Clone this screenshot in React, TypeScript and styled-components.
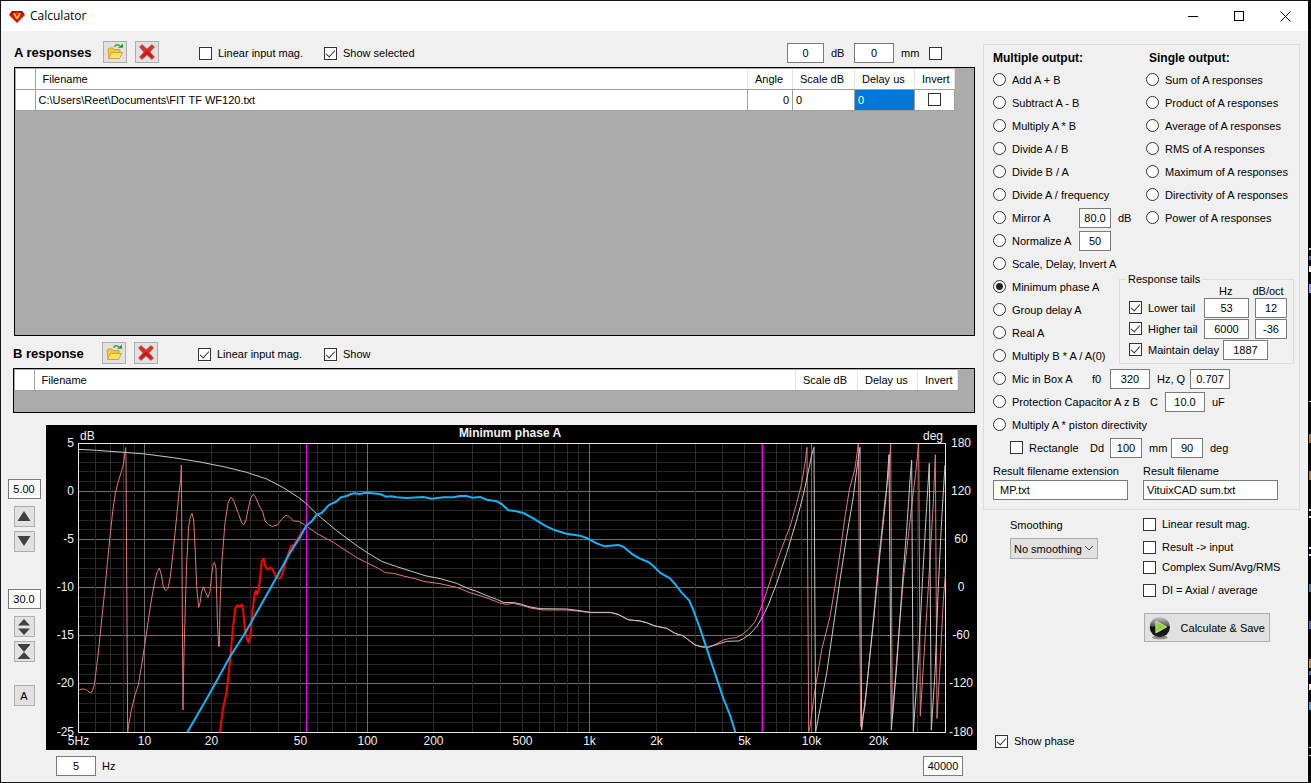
import React from "react";
import styled, { createGlobalStyle, css } from "styled-components";

const GlobalStyle = createGlobalStyle`
  * { box-sizing: border-box; }
  body { margin: 0; background: #000; }
  body, input, button, select {
    font-family: "Liberation Sans", Arial, sans-serif;
    font-size: 11px;
    line-height: 14px;
    color: #000;
  }
`;

const Frame = styled.div`
  position: relative;
  display: flex;
  flex-direction: column;
  min-height: 100vh;
  background: #f0f0f0;
  border: 1px solid #14141a;
  border-right: 3px solid #05050a;
`;

const EdgeMark = styled.i<{ $y: number; $h: number; $c: string }>`
  position: absolute;
  top: ${(p) => p.$y}px;
  right: -3px;
  width: 2px;
  height: ${(p) => p.$h}px;
  background: ${(p) => p.$c};
`;

const TitleBar = styled.header`
  display: flex;
  align-items: center;
  height: 30px;
  padding-left: 8px;
  background: #fff;
`;

const Title = styled.h1`
  flex: 1;
  margin: 0 0 0 5px;
  font-family: "Open Sans", "Noto Sans", sans-serif;
  font-size: 12px;
  font-weight: 400;
`;

const CaptionButton = styled.button`
  display: grid;
  place-items: center;
  width: 46px;
  height: 30px;
  padding: 0;
  border: 0;
  background: transparent;
`;

const Body = styled.main`
  flex: 1;
  display: grid;
  grid-template-columns: minmax(0, 1fr) 325px;
`;

const Left = styled.div`
  display: flex;
  flex-direction: column;
  padding: 10px 8px 0 12px;
`;

const ResponseSet = styled.section<{ $inset?: boolean }>`
  margin-bottom: 6px;
  padding-left: ${(p) => (p.$inset ? 1 : 0)}px;
`;

const Toolbar = styled.div`
  display: flex;
  align-items: center;
  height: 24px;
  margin-bottom: 2px;
`;

const Heading = styled.h2`
  width: 89px;
  margin: 0;
  font-size: 13px;
  font-weight: 700;
  white-space: nowrap;
`;

const IconButton = styled.button`
  display: grid;
  place-items: center;
  align-self: flex-start;
  width: 24px;
  height: 22px;
  margin-right: 8px;
  padding: 0;
  border: 1px solid #adadad;
  background: #e1e1e1;
`;

const Gap = styled.span<{ $w?: number }>`
  ${(p) => (p.$w ? css`flex: none; width: ${p.$w}px;` : css`flex: 1;`)}
`;

const Choice = styled.label<{ $w?: number }>`
  flex: none;
  display: flex;
  align-items: center;
  gap: 6px;
  white-space: nowrap;
  ${(p) => p.$w && css`width: ${p.$w}px;`}
`;

const Check = styled.input.attrs({ type: "checkbox" })`
  appearance: none;
  position: relative;
  flex: none;
  width: 13px;
  height: 13px;
  margin: 0;
  border: 1px solid #333;
  background: #fff;
  &:checked::after {
    content: "";
    position: absolute;
    left: 3px;
    top: 0;
    width: 4px;
    height: 8px;
    border: solid #333;
    border-width: 0 1px 1px 0;
    transform: rotate(42deg);
  }
`;

const Radio = styled.input.attrs({ type: "radio" })`
  appearance: none;
  flex: none;
  width: 13px;
  height: 13px;
  margin: 0;
  border: 1px solid #333;
  border-radius: 50%;
  background: #fff;
  &:checked {
    background: radial-gradient(circle, #222 0 3px, #fff 4px);
  }
`;

const Field = styled.input<{ $w: number; $left?: boolean; $top?: number }>`
  flex: none;
  width: ${(p) => p.$w}px;
  height: 20px;
  margin: ${(p) => p.$top ?? 0}px 0 0;
  padding: 0 3px;
  border: 1px solid #7a7a7a;
  border-radius: 0;
  background: #fff;
  text-align: ${(p) => (p.$left ? "left" : "center")};
`;

const Grid = styled.div<{ $h: number }>`
  height: ${(p) => p.$h}px;
  padding: 1px 0 0 1px;
  border: 1px solid #000;
  background: #ababab;
`;

const Table = styled.table<{ $rest: number }>`
  width: calc(100% - ${(p) => p.$rest}px);
  table-layout: fixed;
  border-collapse: collapse;
  th, td {
    height: 21px;
    padding: 0 0 0 3px;
    border-right: 1px solid #a0a0a0;
    border-bottom: 1px solid #a0a0a0;
    background: #fff;
    font-weight: 400;
    text-align: left;
    white-space: nowrap;
  }
  th {
    height: 20px;
    padding-left: 7px;
    border-right-color: #e5e5e5;
  }
  th:first-child { border-right-color: #a0a0a0; }
`;

const Cell = styled.td<{ $kind: "number" | "selected" | "tick" }>`
  && {
    ${(p) => p.$kind === "number" && css`text-align: right; padding-right: 3px;`}
    ${(p) => p.$kind === "selected" && css`background: #0078d7; color: #fff;`}
    ${(p) => p.$kind === "tick" && css`padding-left: 13px;`}
  }
  ${Check} { display: block; }
`;

const ChartRow = styled.div`
  display: flex;
  margin: 6px -2px 0 -7px;
`;

const ScaleColumn = styled.div`
  flex: none;
  display: flex;
  flex-direction: column;
  align-items: center;
  width: 40px;
  padding: 54px 4px 0 0;
`;

const ScaleButton = styled.button<{ $top: number }>`
  display: grid;
  place-items: center;
  width: 21px;
  height: 21px;
  margin-top: ${(p) => p.$top}px;
  padding: 0;
  border: 1px solid #adadad;
  background: #e1e1e1;
`;

const ChartSvg = styled.svg`
  flex: 1;
  min-width: 0;
  display: block;
  background: #000;
`;

const Label = styled.text`
  fill: #f0f0f0;
  font-size: 12px;
`;

const ChartTitle = styled(Label)`
  font-weight: 700;
`;

const RangeRow = styled.div`
  display: flex;
  align-items: center;
  gap: 6px;
  margin-top: 6px;
  padding: 0 12px 0 43px;
`;

const Right = styled.aside`
  display: flex;
  flex-direction: column;
  padding: 13px 8px 34px 0;
`;

const Group = styled.section`
  padding: 6px 5px 9px 9px;
  border: 1px solid #dcdcdc;
`;

const Columns = styled.div`
  display: flex;
`;

const MultipleColumn = styled.div`
  width: 126px;
  flex: none;
`;

const SingleColumn = styled.div`
  flex: 1;
`;

const SingleList = styled.div`
  padding-left: 27px;
  margin-bottom: 43px;
`;

const ListTitle = styled.h3<{ $indent?: number }>`
  margin: 0 0 3px ${(p) => p.$indent ?? 0}px;
  font-size: 12px;
  line-height: 14px;
  font-weight: 700;
`;

const Row = styled.div<{ $indent?: number }>`
  display: flex;
  align-items: center;
  height: 23px;
  padding-left: ${(p) => p.$indent ?? 0}px;
  white-space: nowrap;
`;

const Unit = styled.span<{ $w?: number }>`
  flex: none;
  ${(p) => p.$w && css`width: ${p.$w}px;`}
  padding-left: 7px;
  white-space: nowrap;
`;

const Tails = styled.fieldset`
  min-width: 0;
  margin: 0;
  padding: 0 0 3px 9px;
  border: 1px solid #dcdcdc;
  legend {
    margin-left: -3px;
    padding: 0 2px;
    height: 14px;
  }
`;

const TailHead = styled.div`
  display: flex;
  height: 13px;
  margin-top: -2px;
  padding-left: 90px;
  gap: 20px;
`;

const TailRow = styled.div`
  display: flex;
  align-items: center;
  height: 21px;
`;

const NameFields = styled.div`
  display: grid;
  grid-template-columns: 150px 1fr;
  margin-top: 5px;
  label { display: grid; gap: 2px; }
`;

const Options = styled.div`
  display: grid;
  grid-template-columns: 133px 1fr;
  padding-left: 27px;
`;

const Smoothing = styled.label`
  display: flex;
  flex-direction: column;
  align-items: flex-start;
  gap: 6px;
  padding-top: 8px;
`;

const SelectBox = styled.span`
  position: relative;
  svg {
    position: absolute;
    right: 4px;
    top: 7px;
    pointer-events: none;
  }
`;

const Select = styled.select`
  appearance: none;
  display: block;
  width: 88px;
  height: 21px;
  padding: 0 3px;
  border: 1px solid #adadad;
  border-radius: 0;
  background: #e1e1e1;
`;

const OptionList = styled.div`
  display: grid;
  gap: 9px;
  padding-top: 7px;
`;

const OptionPair = styled.div`
  display: grid;
  gap: 6px;
`;

const SaveButton = styled.button`
  display: flex;
  align-items: center;
  gap: 10px;
  width: 126px;
  height: 29px;
  margin: 7px 0 0 1px;
  padding: 0 4px;
  border: 1px solid #adadad;
  background: #e1e1e1;
  white-space: nowrap;
`;

const PhaseToggle = styled.div`
  margin-top: auto;
  padding-left: 12px;
`;

const Gem = () => (
  <svg width="16" height="13" viewBox="0 0 16 13">
    <path d="M3 1h10l3 4-8 8-8-8z" fill="#d40f0f" />
    <path d="M3 1h10l2 3H1z" fill="#a80a0a" />
    <path d="M4 3l3 6h2l3-6h-2L8 7 6 3z" fill="#ffd21f" />
    <path d="M6 2h4L8 5z" fill="#e83a14" />
  </svg>
);

const OpenFolder = () => (
  <svg width="18" height="18" viewBox="0 0 18 18">
    <path d="M2 6.500L3 5h4l1 1.500h6V9L13 15H3z" fill="#f0c93e" stroke="#c09a1e" strokeWidth="0.800" />
    <path d="M2.500 15.500L5.500 9.500h11l-3 6z" fill="#fbe169" stroke="#c79a1c" strokeWidth="0.800" />
    <path d="M8.500 3.800c1-2.600 4-2.600 5.500-0.800" fill="none" stroke="#3aa53a" strokeWidth="1.500" />
    <path d="M12 4.800h5V0.500z" fill="#2c942c" />
  </svg>
);

const RedCross = () => (
  <svg width="18" height="18" viewBox="0 0 18 18">
    <path d="M1.500 4L4 1.500 9 6l5-4.500L16.500 4 12 9l4.500 5-2.500 2.500L9 12l-5 4.500L1.500 14 6 9z" fill="#d3302c" stroke="#d3504c" strokeWidth="0.800" strokeLinejoin="round" />
    <path d="M4 14l5-5 5 5" fill="none" stroke="#b81414" strokeWidth="1.500" />
  </svg>
);

const PlayBall = () => (
  <svg width="22" height="24" viewBox="0 0 22 24">
    <defs>
      <linearGradient id="ball" x1="0" y1="0" x2="0" y2="1">
        <stop offset="0" stopColor="#c9c9c9" />
        <stop offset="0.45" stopColor="#555" />
        <stop offset="0.5" stopColor="#0c0c0c" />
        <stop offset="1" stopColor="#222" />
      </linearGradient>
    </defs>
    <ellipse cx="11" cy="21.500" rx="8" ry="2" fill="#8a8a8a" />
    <circle cx="11" cy="11" r="10.300" fill="url(#ball)" />
    <path d="M7 5l11 6-11 6z" fill="#8fd23c" stroke="#e0f5b8" strokeWidth="0.800" />
  </svg>
);

const PLOT = { left: 32.5, top: 18.5, width: 867, height: 289 };
const xOf = (hz: number) =>
  PLOT.left + Math.floor((PLOT.width * Math.log(hz / 5)) / Math.log(8000));
const yOf = (db: number) => PLOT.top + Math.floor(((5 - db) / 30) * PLOT.height);

const FREQS = [1, 10, 100, 1000, 10000]
  .flatMap((d) => [1, 2, 3, 4, 5, 6, 7, 8, 9].map((n) => n * d))
  .filter((f) => f > 5 && f < 40000);
const LEVELS = Array.from({ length: 29 }, (_, i) => 4 - i);
const X_LABELS: [number, string][] = [
  [5, "5Hz"], [10, "10"], [20, "20"], [50, "50"], [100, "100"], [200, "200"],
  [500, "500"], [1000, "1k"], [2000, "2k"], [5000, "5k"], [10000, "10k"], [20000, "20k"],
];

const BAND = [0, 900, 1920];
const curve = (...bands: string[]) =>
  bands
    .map((b, i) =>
      b.split(" ").map((p) => {
        const [x, y] = p.split(",").map(Number);
        return `${x + BAND[i]},${y}`;
      }).join(" "))
    .join(" ");

const MEASURED_PHASE = curve(
  "235,812 245,807 257,808 270,818 276,815 283,795 290,740 297,680 305,600 315,505 322,430 330,350 338,275 346,220 354,188 364,155 370,135 374,105 377,83 378,110 383,937 386,915 393,875 405,825 415,795 425,735 435,670 445,600 455,535 465,480 472,455 478,444 484,465 490,500 497,512 504,505 511,470 520,390 530,290 538,210 542,180 544,135 549,870 552,700 556,560 560,430 566,320 571,290 576,280 581,300 586,400 590,500 596,562 600,550 605,515 610,500 616,515 624,532 630,515 635,465 640,430 644,428 648,445 652,600 656,680 658,680 660,560 666,420 675,310 684,250 690,235 695,233 702,245 715,280 725,308 731,315 738,300 745,265 752,235 759,223 766,230 780,262 788,275 795,303 805,314 817,319 832,315 845,298 858,286 868,290 880,303 895,304",
  "15,315 50,340 100,367 135,390 170,413 200,428 235,445 256,458 280,460 310,468 345,476 375,485 420,491 470,502 510,518 550,530 600,549 618,553 640,550 665,556 695,565 730,570 800,570 840,574 870,578 935,578 955,584 985,600",
  "0,603 20,608 45,618 80,625 105,640 130,648 165,674 185,680 205,681 225,674 250,660 270,655 290,653 308,642 325,628 345,605 360,572 368,550 380,515 400,455 425,385 450,320 470,250 485,190 495,130 501,82 506,935 510,920 525,810 545,690 570,590 585,500 600,400 615,290 628,210 645,145 655,72 662,920 675,860 700,600 715,430 735,240 745,170 752,72 757,895 770,720 790,480 815,260 828,150 836,72 841,888 850,740 865,500 880,250 886,104 891,895 900,740 910,540 916,465"
);
const MINIMUM_PHASE = curve(
  "235,88 290,91 345,95 435,102 520,113 600,126 680,142 740,157 800,177 850,203 895,232",
  "20,252 50,282 80,307 110,332 150,362 175,380 205,400 245,424 290,440 335,454 375,467 425,477 470,490 510,508 530,514 560,527 590,538 612,548 640,547 665,553 690,561 720,566 800,567 840,572 870,577 930,577 955,583 985,599",
  "0,603 20,608 45,618 80,625 105,640 130,648 165,675 185,681 205,682 235,672 260,664 295,663 310,656 330,642 350,620 368,590 385,555 410,490 440,400 470,300 490,225 505,155 515,105 522,82 527,935 530,920 545,840 560,760 580,620 600,480 620,350 640,230 650,150 660,82 665,930 680,800 700,610 720,400 738,230 747,104 754,930 770,740 785,520 800,330 810,180 815,120 820,935 835,720 848,470 860,260 868,130 874,930 885,760 895,500 905,300 915,135"
);
const MEASURED_LEVEL = curve(
  "660,937 668,870 680,815 690,725 698,630 706,565 712,556 720,560 726,554 730,575 736,640 742,660 746,668 752,640 758,570 764,520 768,512 771,523 776,510 780,475 785,425 791,416 796,440 803,448 812,443 818,450 828,470 835,475 843,472 852,445 865,400 873,378 882,375 900,345 918,318"
);
const RESULT_LEVEL = curve(
  "562,937 632,815 690,710 735,640 780,560 828,475 870,398 900,352",
  "20,316 35,304 50,284 65,279 85,257 95,251 107,246 123,232 140,228 150,223 165,220 178,222 200,218 240,222 258,230 275,229 290,232 320,234 370,231 395,236 430,232 460,232 480,228 500,228 517,233 540,231 560,239 590,244 605,252 625,271 645,273 670,279 700,295 735,317 765,331 800,341 840,347 860,354 890,370 915,379 955,375 970,380 1000,405",
  "0,416 25,426 40,438 60,458 90,475 105,492 125,518 148,542 160,570 180,625 200,685 225,760 250,835 270,885 286,937"
);

const Chart = () => (
  <ChartSvg viewBox="0 0 931 325" role="img" aria-label="Minimum phase A">
    <g strokeWidth="1">
      {LEVELS.map((v) => (
        <line key={v} x1={PLOT.left} x2={899} y1={yOf(v)} y2={yOf(v)} stroke={v % 5 === 0 ? "#6e6e6e" : "#262626"} />
      ))}
      {FREQS.map((f) => (
        <line key={f} x1={xOf(f)} x2={xOf(f)} y1={PLOT.top} y2={307} stroke={/^10*$/.test(String(f)) ? "#6e6e6e" : "#2c2c2c"} />
      ))}
      <rect x={PLOT.left} y={PLOT.top} width={PLOT.width} height={PLOT.height} fill="none" stroke="#e8e8e8" />
    </g>
    <g stroke="#f000f0" strokeWidth="1">
      <line x1="260.500" x2="260.500" y1="19" y2="307" />
      <line x1="716.500" x2="716.500" y1="19" y2="307" />
    </g>
    <g transform="translate(-46 -5) scale(0.33333)" fill="none" strokeLinejoin="round">
      <polyline points={MEASURED_PHASE} stroke="#e07878" strokeWidth="3" />
      <polyline points={MINIMUM_PHASE} stroke="#c8c8c8" strokeWidth="3" />
      <polyline points={MEASURED_LEVEL} stroke="#f00" strokeWidth="6" />
      <polyline points={RESULT_LEVEL} stroke="#14b4f5" strokeWidth="6" />
    </g>
    <ChartTitle x="464" y="12" textAnchor="middle">Minimum phase A</ChartTitle>
    <Label x="34" y="15">dB</Label>
    <Label x="897" y="15" textAnchor="end">deg</Label>
    {[5, 0, -5, -10, -15, -20, -25].map((v) => (
      <Label key={v} x="28" y={yOf(v) + 3} textAnchor="end">{v}</Label>
    ))}
    {[180, 120, 60, 0, -60, -120, -180].map((v, i) => (
      <Label key={v} x="915" y={yOf(5 - i * 5) + 3} textAnchor="middle">{v}</Label>
    ))}
    {X_LABELS.map(([f, t]) => (
      <Label key={t} x={xOf(f)} y="320" textAnchor="middle">{t}</Label>
    ))}
  </ChartSvg>
);

const Option = ({ text, on, w }: { text: string; on?: boolean; w?: number }) => (
  <Choice $w={w}><Check defaultChecked={on} />{text}</Choice>
);

const Mode = ({ text, on, w }: { text: string; on?: boolean; w?: number }) => (
  <Choice $w={w}><Radio name="operation" defaultChecked={on} />{text}</Choice>
);

const FileButtons = ({ set }: { set: string }) => (
  <>
    <IconButton aria-label={`Open ${set} files`}><OpenFolder /></IconButton>
    <IconButton aria-label={`Remove ${set} files`}><RedCross /></IconButton>
  </>
);

const MULTIPLE = ["Add A + B", "Subtract A - B", "Multiply A * B", "Divide A / B", "Divide B / A", "Divide A / frequency"];
const SINGLE = ["Sum", "Product", "Average", "RMS", "Maximum", "Directivity", "Power"];

// Slivers of the window behind, showing past the right edge: top, height, colour.
const EDGE_MARKS: [number, number, string][] = [
  [247, 2, "#9fd4e8"], [255, 4, "#3a78b8"], [265, 6, "#e8e8e8"], [283, 9, "#6ab4e8"],
  [400, 1, "#d8d8d8"], [433, 9, "#b8702a"], [470, 9, "#b8702a"], [508, 2, "#cfe4f0"],
  [515, 2, "#cfe4f0"], [546, 2, "#cfe4f0"], [553, 2, "#cfe4f0"], [583, 8, "#3f6ea8"],
  [620, 8, "#3f6ea8"], [658, 9, "#d8893a"], [670, 4, "#3a78b8"], [683, 6, "#e8e8e8"],
  [701, 8, "#4a9ae0"], [746, 1, "#d8d8d8"], [754, 1, "#d8d8d8"],
];

export default function App() {
  return (
    <>
      <GlobalStyle />
      <Frame>
        {EDGE_MARKS.map(([y, h, c]) => <EdgeMark key={y} $y={y} $h={h} $c={c} />)}
        <TitleBar>
          <Gem />
          <Title>Calculator</Title>
          <CaptionButton aria-label="Minimize">
            <svg width="10" height="10"><path d="M0 5.500h10" stroke="#000" /></svg>
          </CaptionButton>
          <CaptionButton aria-label="Maximize">
            <svg width="10" height="10"><rect x="0.500" y="0.500" width="9" height="9" fill="none" stroke="#000" /></svg>
          </CaptionButton>
          <CaptionButton aria-label="Close">
            <svg width="11" height="11"><path d="M0.500 0.500l10 10M10.500 0.500l-10 10" stroke="#000" /></svg>
          </CaptionButton>
        </TitleBar>
        <Body>
          <Left>
            <ResponseSet $inset>
              <Toolbar>
                <Heading>A responses</Heading>
                <FileButtons set="A" />
                <Gap $w={32} />
                <Option text="Linear input mag." w={125} />
                <Option text="Show selected" on />
                <Gap />
                <Field $w={37} defaultValue="0" aria-label="Scale dB" />
                <Unit $w={30}>dB</Unit>
                <Field $w={40} defaultValue="0" aria-label="Delay mm" />
                <Unit $w={35}>mm</Unit>
                <Check aria-label="Invert all" />
                <Gap $w={33} />
              </Toolbar>
              <Grid $h={269}>
                <Table $rest={19}>
                  <colgroup>
                    <col style={{ width: 19 }} /><col /><col style={{ width: 45 }} />
                    <col style={{ width: 62 }} /><col style={{ width: 60 }} /><col style={{ width: 40 }} />
                  </colgroup>
                  <thead>
                    <tr><th /><th>Filename</th><th>Angle</th><th>Scale dB</th><th>Delay us</th><th>Invert</th></tr>
                  </thead>
                  <tbody>
                    <tr>
                      <td />
                      <td>C:\Users\Reet\Documents\FIT TF WF120.txt</td>
                      <Cell $kind="number">0</Cell>
                      <td>0</td>
                      <Cell $kind="selected">0</Cell>
                      <Cell $kind="tick"><Check aria-label="Invert" /></Cell>
                    </tr>
                  </tbody>
                </Table>
              </Grid>
            </ResponseSet>
            <ResponseSet>
              <Toolbar>
                <Heading>B response</Heading>
                <FileButtons set="B" />
                <Gap $w={32} />
                <Option text="Linear input mag." w={126} on />
                <Option text="Show" on />
              </Toolbar>
              <Grid $h={45}>
                <Table $rest={16}>
                  <colgroup>
                    <col style={{ width: 19 }} /><col /><col style={{ width: 62 }} />
                    <col style={{ width: 60 }} /><col style={{ width: 40 }} />
                  </colgroup>
                  <thead>
                    <tr><th /><th>Filename</th><th>Scale dB</th><th>Delay us</th><th>Invert</th></tr>
                  </thead>
                </Table>
              </Grid>
            </ResponseSet>
            <ChartRow>
              <ScaleColumn>
                <Field $w={33} defaultValue="5.00" aria-label="Top level" />
                <ScaleButton $top={7} aria-label="Shift up">
                  <svg width="14" height="11"><path d="M7 0l6.500 10H.5z" fill="#404040" /></svg>
                </ScaleButton>
                <ScaleButton $top={4} aria-label="Shift down">
                  <svg width="14" height="11"><path d="M.5 0h13L7 10z" fill="#404040" /></svg>
                </ScaleButton>
                <Field $w={33} $top={37} defaultValue="30.0" aria-label="Level range" />
                <ScaleButton $top={7} aria-label="Expand">
                  <svg width="14" height="16"><path d="M7 0l6 6.500H1zM1 9.500h12L7 16z" fill="#404040" /></svg>
                </ScaleButton>
                <ScaleButton $top={4} aria-label="Compress">
                  <svg width="14" height="16"><path d="M1 1h12L7 8zM7 8l6 6.500H1z" fill="#404040" /><path d="M1 .5h12M1 14.500h12" stroke="#404040" /></svg>
                </ScaleButton>
                <ScaleButton $top={23}>A</ScaleButton>
              </ScaleColumn>
              <Chart />
            </ChartRow>
            <RangeRow>
              <Field $w={40} defaultValue="5" aria-label="Lowest frequency" />Hz
              <Gap />
              <Field $w={40} defaultValue="40000" aria-label="Highest frequency" />
            </RangeRow>
          </Left>
          <Right>
            <Group>
              <Columns>
                <MultipleColumn>
                  <ListTitle>Multiple output:</ListTitle>
                  {MULTIPLE.map((t) => <Row key={t}><Mode text={t} /></Row>)}
                  <Row>
                    <Mode text="Mirror A" w={86} />
                    <Field $w={32} defaultValue="80.0" aria-label="Mirror level" /><Unit>dB</Unit>
                  </Row>
                  <Row>
                    <Mode text="Normalize A" w={86} />
                    <Field $w={32} defaultValue="50" aria-label="Normalize" />
                  </Row>
                  <Row><Mode text="Scale, Delay, Invert A" /></Row>
                  <Row><Mode text="Minimum phase A" on /></Row>
                  <Row><Mode text="Group delay A" /></Row>
                  <Row><Mode text="Real A" /></Row>
                  <Row><Mode text="Multiply B * A / A(0)" /></Row>
                </MultipleColumn>
                <SingleColumn>
                  <SingleList>
                    <ListTitle $indent={3}>Single output:</ListTitle>
                    {SINGLE.map((t) => <Row key={t}><Mode text={`${t} of A responses`} /></Row>)}
                  </SingleList>
                  <Tails>
                    <legend>Response tails</legend>
                    <TailHead><span>Hz</span><span>dB/oct</span></TailHead>
                    <TailRow>
                      <Option text="Lower tail" on w={75} />
                      <Field $w={45} defaultValue="53" aria-label="Lower tail Hz" />
                      <Gap $w={6} />
                      <Field $w={32} defaultValue="12" aria-label="Lower tail slope" />
                    </TailRow>
                    <TailRow>
                      <Option text="Higher tail" on w={75} />
                      <Field $w={45} defaultValue="6000" aria-label="Higher tail Hz" />
                      <Gap $w={6} />
                      <Field $w={32} defaultValue="-36" aria-label="Higher tail slope" />
                    </TailRow>
                    <TailRow>
                      <Option text="Maintain delay" on w={94} />
                      <Field $w={45} defaultValue="1887" aria-label="Delay" />
                    </TailRow>
                  </Tails>
                </SingleColumn>
              </Columns>
              <Row>
                <Mode text="Mic in Box A" w={92} />
                <Unit $w={25}>f0</Unit><Field $w={40} defaultValue="320" aria-label="f0" />
                <Unit $w={40}>Hz, Q</Unit><Field $w={40} defaultValue="0.707" aria-label="Q" />
              </Row>
              <Row>
                <Mode text="Protection Capacitor A z B" w={150} />
                <Unit $w={22}>C</Unit><Field $w={40} defaultValue="10.0" aria-label="C" /><Unit>uF</Unit>
              </Row>
              <Row><Mode text="Multiply A * piston directivity" /></Row>
              <Row $indent={17}>
                <Option text="Rectangle" w={73} />
                <Unit $w={27}>Dd</Unit><Field $w={32} defaultValue="100" aria-label="Dd" />
                <Unit $w={29}>mm</Unit><Field $w={32} defaultValue="90" aria-label="Angle" /><Unit>deg</Unit>
              </Row>
              <NameFields>
                <label>Result filename extension<Field $w={135} $left defaultValue=" MP.txt" /></label>
                <label>Result filename<Field $w={135} $left defaultValue="VituixCAD sum.txt" /></label>
              </NameFields>
            </Group>
            <Options>
              <Smoothing>
                Smoothing
                <SelectBox>
                  <Select defaultValue="none"><option value="none">No smoothing</option></Select>
                  <svg width="10" height="7"><path d="M1 1l4 4 4-4" fill="none" stroke="#444" /></svg>
                </SelectBox>
              </Smoothing>
              <OptionList>
                <Option text="Linear result mag." />
                <OptionPair>
                  <Option text="Result -> input" />
                  <Option text="Complex Sum/Avg/RMS" />
                </OptionPair>
                <Option text="DI = Axial / average" />
                <SaveButton><PlayBall />Calculate &amp; Save</SaveButton>
              </OptionList>
            </Options>
            <PhaseToggle><Option text="Show phase" on /></PhaseToggle>
          </Right>
        </Body>
      </Frame>
    </>
  );
}
